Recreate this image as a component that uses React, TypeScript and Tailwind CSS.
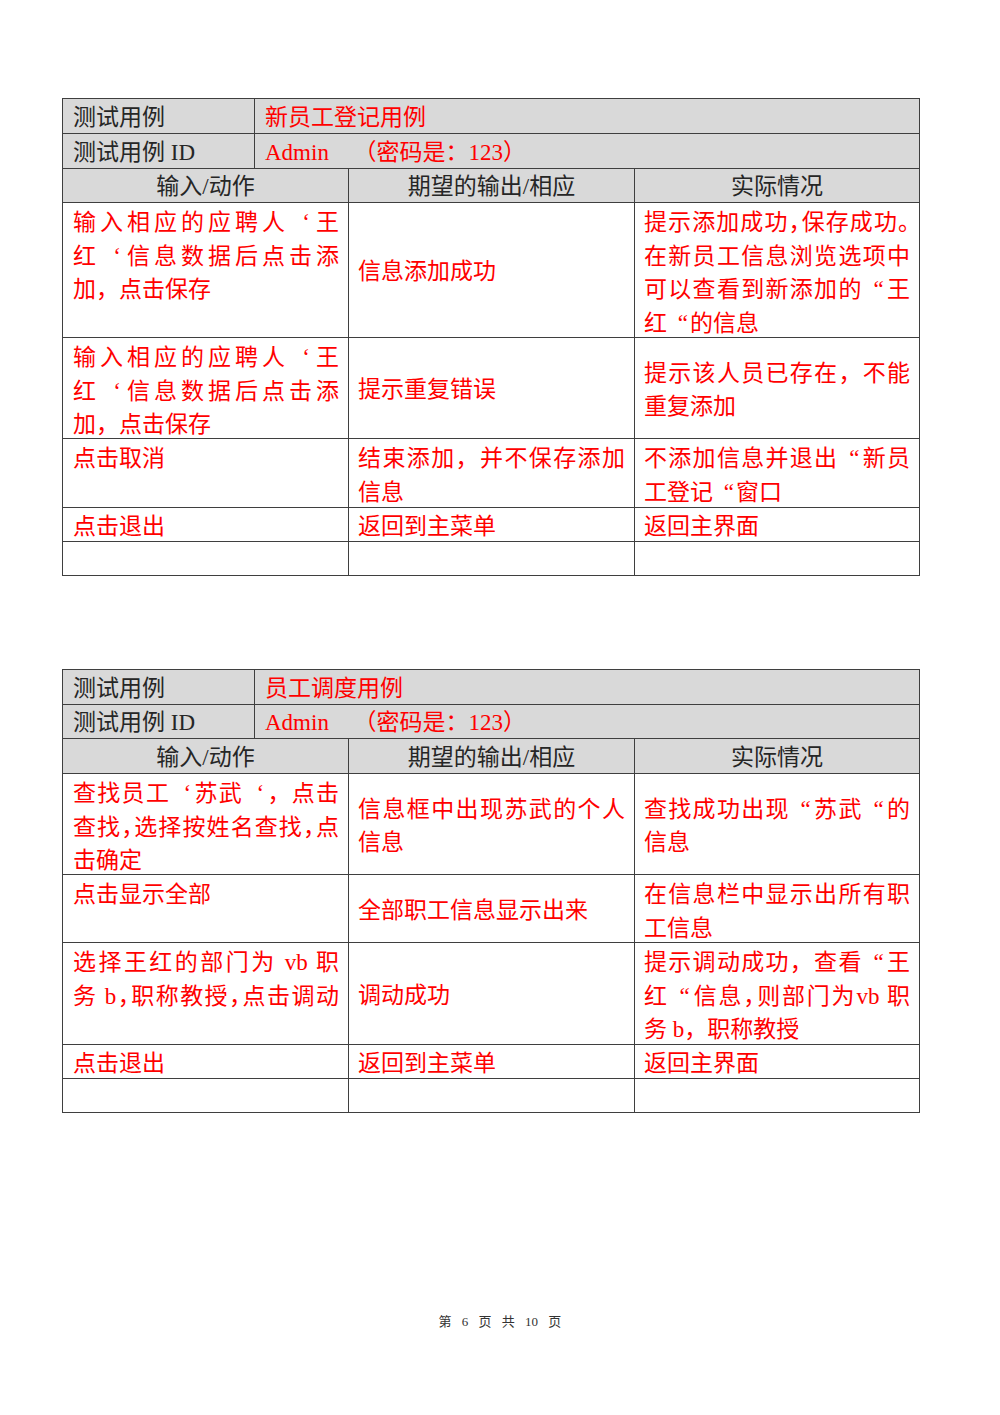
import React from 'react';

type Line = [string, number?];
type CellData = { lines: Line[]; mid?: boolean };
type RowData = { h: string; cells: CellData[] };

// "^，" marks a compressed (half-width) punctuation mark; quotes take a full em
function Txt({ s }: { s: string }) {
  const parts = s.split(/(\^.|[‘“])/);
  return (
    <>
      {parts.map((p, i) =>
        p.startsWith('^') ? (
          <span key={i} className="tracking-[-11px]">
            {p.slice(1)}
          </span>
        ) : p === '‘' || p === '“' ? (
          <span key={i} className="inline-block w-[1em] text-right [text-align-last:right] pr-[2px]">
            {p}
          </span>
        ) : (
          <React.Fragment key={i}>{p}</React.Fragment>
        ),
      )}
    </>
  );
}

function Cell({ cell, first, last }: { cell: CellData; first?: boolean; last?: boolean }) {
  return (
    <div
      className={`${first ? 'w-[286px] pl-[10px] pr-[9px]' : last ? 'flex-1 px-[9px]' : 'w-[286px] px-[9px]'} ${
        last ? '' : 'border-r border-[#3f3f3f]'
      } ${cell.mid ? 'flex flex-col justify-center pt-[4px]' : 'pt-[3px]'} text-[#ff0000] leading-[33.5px]`}
    >
      {cell.lines.map(([t, j], i) => (
        <div key={i} className={j ? 'whitespace-nowrap [text-align-last:justify]' : 'whitespace-nowrap'}>
          <Txt s={t} />
        </div>
      ))}
    </div>
  );
}

function TestTable({ title, heads, rows }: { title: string; heads: string[]; rows: RowData[] }) {
  return (
    <div className="w-[858px] border-t border-l border-r border-[#3f3f3f]">
      <div className={`${heads[0]} flex border-b border-[#3f3f3f] bg-[#d9d9d9] pt-[4px]`}>
        <div className="w-[192px] border-r border-[#3f3f3f] mt-[-4px] pt-[4px] pl-[10px] flex items-center text-[#262626]">测试用例</div>
        <div className="flex-1 pl-[10px] flex items-center text-[#ff0000]">{title}</div>
      </div>
      <div className={`${heads[1]} flex border-b border-[#3f3f3f] bg-[#d9d9d9] pt-[4px]`}>
        <div className="w-[192px] border-r border-[#3f3f3f] mt-[-4px] pt-[4px] pl-[10px] flex items-center text-[#262626]">测试用例 ID</div>
        <div className="flex-1 pl-[10px] flex items-center text-[#ff0000] whitespace-pre">
          Admin<span className="pl-[13px]">　（密码是：123）</span>
        </div>
      </div>
      <div className={`${heads[2]} flex border-b border-[#3f3f3f] bg-[#d9d9d9] text-[#262626]`}>
        <div className="w-[286px] border-r border-[#3f3f3f] pt-[4px] flex items-center justify-center">输入/动作</div>
        <div className="w-[286px] border-r border-[#3f3f3f] pt-[4px] flex items-center justify-center">期望的输出/相应</div>
        <div className="flex-1 pt-[4px] flex items-center justify-center">实际情况</div>
      </div>
      {rows.map((r, i) => (
        <div key={i} className={`${r.h} flex border-b border-[#3f3f3f] overflow-hidden`}>
          <Cell cell={r.cells[0]} first />
          <Cell cell={r.cells[1]} />
          <Cell cell={r.cells[2]} last />
        </div>
      ))}
    </div>
  );
}

const empty: CellData = { lines: [] };

const rowsOne: RowData[] = [
  {
    h: 'h-[135px]',
    cells: [
      { lines: [['输入相应的应聘人‘王', 1], ['红‘信息数据后点击添', 1], ['加，点击保存']] },
      { mid: true, lines: [['信息添加成功']] },
      {
        lines: [
          ['提示添加成功^，保存成功^。', 1],
          ['在新员工信息浏览选项中', 1],
          ['可以查看到新添加的“王', 1],
          ['红“的信息'],
        ],
      },
    ],
  },
  {
    h: 'h-[101px]',
    cells: [
      { lines: [['输入相应的应聘人‘王', 1], ['红‘信息数据后点击添', 1], ['加，点击保存']] },
      { mid: true, lines: [['提示重复错误']] },
      { mid: true, lines: [['提示该人员已存在，不能', 1], ['重复添加']] },
    ],
  },
  {
    h: 'h-[69px]',
    cells: [
      { lines: [['点击取消']] },
      { lines: [['结束添加，并不保存添加', 1], ['信息']] },
      { lines: [['不添加信息并退出“新员', 1], ['工登记“窗口']] },
    ],
  },
  {
    h: 'h-[34px]',
    cells: [
      { mid: true, lines: [['点击退出']] },
      { mid: true, lines: [['返回到主菜单']] },
      { mid: true, lines: [['返回主界面']] },
    ],
  },
  { h: 'h-[34px]', cells: [empty, empty, empty] },
];

const rowsTwo: RowData[] = [
  {
    h: 'h-[101px]',
    cells: [
      { lines: [['查找员工‘苏武‘，点击', 1], ['查找^，选择按姓名查找^，点', 1], ['击确定']] },
      { mid: true, lines: [['信息框中出现苏武的个人', 1], ['信息']] },
      { mid: true, lines: [['查找成功出现“苏武“的', 1], ['信息']] },
    ],
  },
  {
    h: 'h-[68px]',
    cells: [
      { lines: [['点击显示全部']] },
      { mid: true, lines: [['全部职工信息显示出来']] },
      { lines: [['在信息栏中显示出所有职', 1], ['工信息']] },
    ],
  },
  {
    h: 'h-[102px]',
    cells: [
      { lines: [['选择王红的部门为 vb 职', 1], ['务 b^，职称教授^，点击调动', 1]] },
      { mid: true, lines: [['调动成功']] },
      { lines: [['提示调动成功，查看“王', 1], ['红“信息^，则部门为vb 职', 1], ['务 b，职称教授']] },
    ],
  },
  {
    h: 'h-[34px]',
    cells: [
      { mid: true, lines: [['点击退出']] },
      { mid: true, lines: [['返回到主菜单']] },
      { mid: true, lines: [['返回主界面']] },
    ],
  },
  { h: 'h-[34px]', cells: [empty, empty, empty] },
];

export default function App() {
  return (
    <div className="min-h-[1415px] bg-white pt-[98px] pl-[62px] font-['Liberation_Serif','Noto_Sans_CJK_SC',serif] text-[23px]">
      <TestTable title="新员工登记用例" heads={['h-[35px]', 'h-[35px]', 'h-[34px]']} rows={rowsOne} />
      <div className="mt-[93px]">
        <TestTable title="员工调度用例" heads={['h-[35px]', 'h-[34px]', 'h-[35px]']} rows={rowsTwo} />
      </div>
      <div className="mt-[200px] w-[876px] text-center text-[13px] leading-[18px] text-[#333] [word-spacing:7px]">
        第 6 页 共 10 页
      </div>
    </div>
  );
}
